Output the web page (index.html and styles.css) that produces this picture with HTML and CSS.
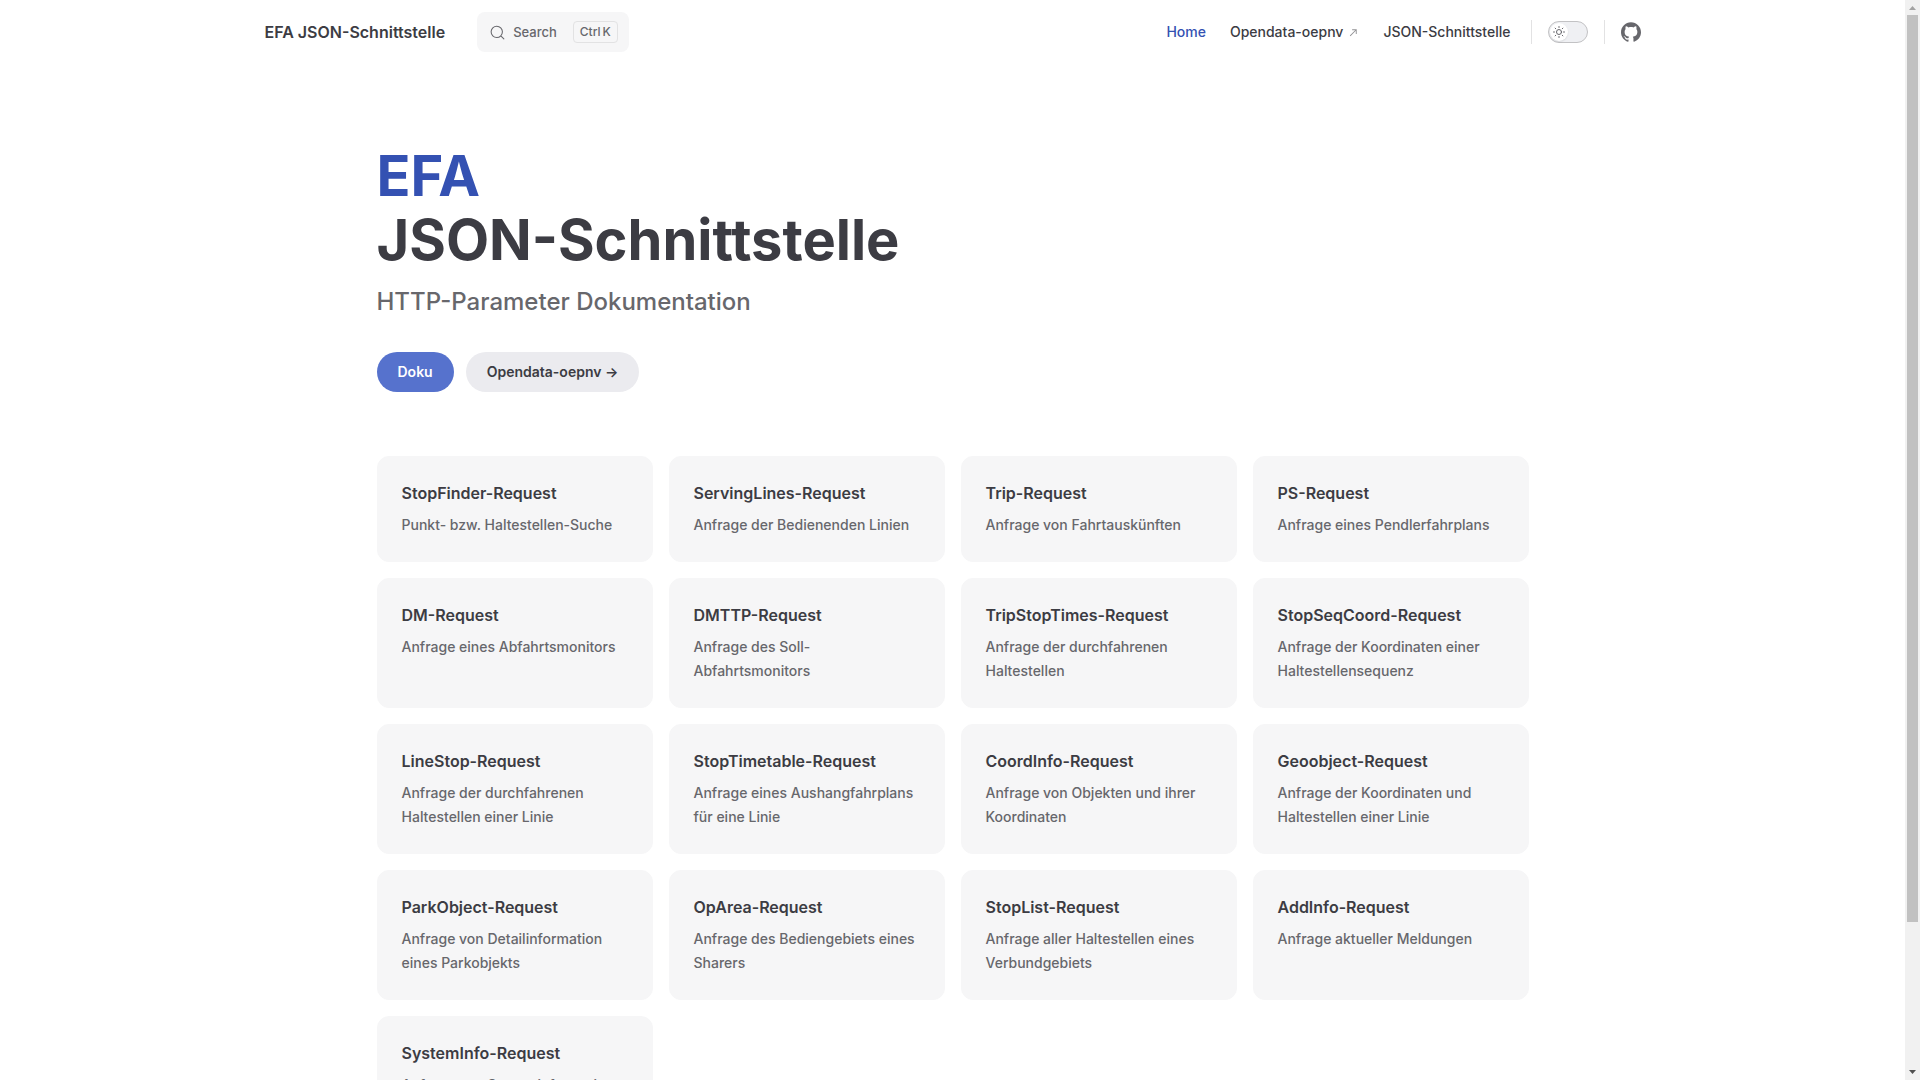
FILE: index.html
```html
<!DOCTYPE html>
<html lang="de">
<head>
<meta charset="utf-8">
<meta name="viewport" content="width=device-width, initial-scale=1">
<title>EFA JSON-Schnittstelle</title>
<link rel="stylesheet" href="styles.css">
</head>
<body>
<div class="page">
<header class="nav">
  <div class="nav-inner">
    <a class="site-title" href="#">EFA JSON-Schnittstelle</a>
    <button class="search" type="button">
      <svg class="search-icon" viewBox="0 0 20 20" aria-hidden="true"><path d="M14.386 14.386l4.088 4.088-4.088-4.088A7.533 7.533 0 1 1 3.733 3.733a7.533 7.533 0 0 1 10.653 10.653z" fill="none" stroke="currentColor" stroke-width="1.4" stroke-linecap="round" stroke-linejoin="round"/></svg>
      <span class="search-label">Search</span>
      <kbd class="search-keys"><span>Ctrl</span><span>K</span></kbd>
    </button>
    <nav class="menu">
      <a class="menu-link active" href="#">Home</a>
      <a class="menu-link" href="#">Opendata-oepnv<svg class="external-icon" viewBox="0 0 24 24" aria-hidden="true"><path d="M9 5v2h6.59L4 18.59 5.41 20 17 8.41V15h2V5H9z" fill="currentColor"/></svg></a>
      <a class="menu-link" href="#">JSON-Schnittstelle</a>
    </nav>
    <div class="nav-group">
      <button class="switch" type="button" role="switch" aria-checked="false" aria-label="Dark mode">
        <span class="switch-knob"><svg class="sun-icon" viewBox="0 0 24 24" aria-hidden="true"><g fill="none" stroke="currentColor" stroke-width="2" stroke-linecap="round"><circle cx="12" cy="12" r="5"/><path d="M12 1v2M12 21v2M1 12h2M21 12h2M4.2 4.2l1.4 1.4M18.4 18.4l1.4 1.4M4.2 19.8l1.4-1.4M18.4 5.6l1.4-1.4"/></g></svg></span>
      </button>
    </div>
    <div class="nav-group">
      <a class="social" href="#" aria-label="GitHub"><svg class="social-icon" viewBox="0 0 24 24" aria-hidden="true"><path fill="currentColor" d="M12 .297c-6.63 0-12 5.373-12 12 0 5.303 3.438 9.8 8.205 11.385.6.113.82-.258.82-.577 0-.285-.01-1.04-.015-2.04-3.338.724-4.042-1.61-4.042-1.61C4.422 18.07 3.633 17.7 3.633 17.7c-1.087-.744.084-.729.084-.729 1.205.084 1.838 1.236 1.838 1.236 1.07 1.835 2.809 1.305 3.495.998.108-.776.417-1.305.76-1.605-2.665-.3-5.466-1.332-5.466-5.93 0-1.31.465-2.38 1.235-3.22-.135-.303-.54-1.523.105-3.176 0 0 1.005-.322 3.3 1.23.96-.267 1.98-.399 3-.405 1.02.006 2.04.138 3 .405 2.28-1.552 3.285-1.23 3.285-1.23.645 1.653.24 2.873.12 3.176.765.84 1.23 1.91 1.23 3.22 0 4.61-2.805 5.625-5.475 5.92.42.36.81 1.096.81 2.22 0 1.606-.015 2.896-.015 3.286 0 .315.21.69.825.57C20.565 22.092 24 17.592 24 12.297c0-6.627-5.373-12-12-12"/></svg></a>
    </div>
  </div>
</header>
<main class="home">
  <section class="hero">
    <h1 class="hero-title"><span class="hero-name">EFA</span><span>JSON-Schnittstelle</span></h1>
    <p class="tagline">HTTP-Parameter Dokumentation</p>
    <div class="actions">
      <a class="action brand" href="#">Doku</a>
      <a class="action alt" href="#">Opendata-oepnv →</a>
    </div>
  </section>
  <section class="features">
    <article class="card"><h2>StopFinder-Request</h2><p>Punkt- bzw. Haltestellen-Suche</p></article>
    <article class="card"><h2>ServingLines-Request</h2><p>Anfrage der Bedienenden Linien</p></article>
    <article class="card"><h2>Trip-Request</h2><p>Anfrage von Fahrtauskünften</p></article>
    <article class="card"><h2>PS-Request</h2><p>Anfrage eines Pendlerfahrplans</p></article>
    <article class="card"><h2>DM-Request</h2><p>Anfrage eines Abfahrtsmonitors</p></article>
    <article class="card"><h2>DMTTP-Request</h2><p>Anfrage des Soll-Abfahrtsmonitors</p></article>
    <article class="card"><h2>TripStopTimes-Request</h2><p>Anfrage der durchfahrenen Haltestellen</p></article>
    <article class="card"><h2>StopSeqCoord-Request</h2><p>Anfrage der Koordinaten einer Haltestellensequenz</p></article>
    <article class="card"><h2>LineStop-Request</h2><p>Anfrage der durchfahrenen Haltestellen einer Linie</p></article>
    <article class="card"><h2>StopTimetable-Request</h2><p>Anfrage eines Aushangfahrplans für eine Linie</p></article>
    <article class="card"><h2>CoordInfo-Request</h2><p>Anfrage von Objekten und ihrer Koordinaten</p></article>
    <article class="card"><h2>Geoobject-Request</h2><p>Anfrage der Koordinaten und Haltestellen einer Linie</p></article>
    <article class="card"><h2>ParkObject-Request</h2><p>Anfrage von Detailinformation eines Parkobjekts</p></article>
    <article class="card"><h2>OpArea-Request</h2><p>Anfrage des Bediengebiets eines Sharers</p></article>
    <article class="card"><h2>StopList-Request</h2><p>Anfrage aller Haltestellen eines Verbundgebiets</p></article>
    <article class="card"><h2>AddInfo-Request</h2><p>Anfrage aktueller Meldungen</p></article>
    <article class="card"><h2>SystemInfo-Request</h2><p>Anfrage von Systeminformation</p></article>
  </section>
</main>
</div>
<div class="scrollbar" aria-hidden="true">
  <svg class="scroll-arrow dim" viewBox="0 0 15 15"><path d="M4 10h7L7.5 6z" fill="currentColor"/></svg>
  <div class="scroll-track"><div class="scroll-thumb"></div></div>
  <svg class="scroll-arrow" viewBox="0 0 15 15"><path d="M4 5h7L7.500 9z" fill="currentColor"/></svg>
</div>
</body>
</html>
```
FILE: styles.css
```css
:root {
  --text-1: #3c3c43;
  --text-2: #67676c;
  --text-3: #929295;
  --brand: #3451b2;
  --brand-fill: #5672cd;
  --soft: #f6f6f7;
  --divider: #e2e2e3;
}

* { box-sizing: border-box; }

body {
  display: flex;
  height: 100vh;
  margin: 0;
  background: #fff;
  color: var(--text-1);
  font-family: Inter, "Noto Sans", sans-serif;
  font-size: 16px;
  font-variant-ligatures: no-common-ligatures;
  line-height: 24px;
}

a { color: inherit; text-decoration: none; }
h1, h2, p { margin: 0; }
svg { display: block; flex: none; }
button { font-family: inherit; cursor: pointer; }

.page {
  flex: 1;
  min-width: 0;
  overflow-y: auto;
  scrollbar-width: none;
}

.scrollbar {
  display: flex;
  flex-direction: column;
  width: 15px;
  background: #f1f1f1;
}

.scroll-arrow { width: 15px; height: 15px; color: #505050; }
.scroll-arrow.dim { color: #a3a3a3; }
.scroll-track { flex: 1; padding: 0 2px; }
.scroll-thumb { height: 86.4%; background: #c1c1c1; }

.nav { padding: 0 32px; }

.nav-inner {
  display: flex;
  align-items: center;
  max-width: 1376px;
  height: 64px;
  margin: 0 auto;
}

.site-title { margin-right: 32px; font-weight: 600; }

.search {
  display: flex;
  align-items: center;
  height: 40px;
  padding: 0 10px 0 12px;
  border: 1px solid transparent;
  border-radius: 8px;
  background: var(--soft);
  color: var(--text-2);
}

.search-icon { width: 15px; height: 15px; margin-right: 8px; }

.search-label {
  margin-right: 16px;
  font-size: 13px;
  font-weight: 500;
}

.search-keys {
  display: flex;
  gap: 2px;
  padding: 0 6px;
  border: 1px solid var(--divider);
  border-radius: 4px;
  font-family: inherit;
  font-size: 12px;
  font-weight: 500;
  line-height: 20px;
}

.menu { display: flex; margin-left: auto; margin-right: 8px; }

.menu-link {
  display: flex;
  align-items: center;
  padding: 0 12px;
  font-size: 14px;
  font-weight: 500;
}

.menu-link.active { color: var(--brand); }

.external-icon { width: 11px; height: 11px; margin-left: 5px; color: var(--text-3); }

.nav-group { display: flex; align-items: center; }

.nav-group::before {
  content: "";
  width: 1px;
  height: 24px;
  margin-right: 16px;
  background: var(--divider);
}

.switch {
  width: 40px;
  height: 22px;
  margin-right: 16px;
  padding: 1px;
  border: 1px solid #c2c2c4;
  border-radius: 11px;
  background: #eff0f3;
}

.switch-knob {
  display: grid;
  place-items: center;
  width: 18px;
  height: 18px;
  border-radius: 50%;
  background: #fff;
  box-shadow: 0 1px 2px rgba(0, 0, 0, 0.04), 0 1px 2px rgba(0, 0, 0, 0.06);
  color: var(--text-2);
}

.sun-icon { width: 12px; height: 12px; }

.social { color: var(--text-2); }
.social-icon { width: 20px; height: 20px; }

.home { padding: 80px 64px 128px; }

.hero, .features { max-width: 1152px; margin: 0 auto; }

.hero-title {
  display: flex;
  flex-direction: column;
  font-size: 56px;
  font-weight: 700;
  line-height: 64px;
}

.hero-name { color: var(--brand); }

.tagline {
  padding-top: 12px;
  color: var(--text-2);
  font-size: 24px;
  font-weight: 500;
  line-height: 36px;
}

.actions { display: flex; gap: 12px; padding: 32px 0 64px; }

.action {
  padding: 0 20px;
  border: 1px solid transparent;
  border-radius: 20px;
  font-size: 14px;
  font-weight: 600;
  line-height: 38px;
}

.brand { background: var(--brand-fill); color: #fff; }
.alt { background: #ebebef; }

.features {
  display: grid;
  grid-template-columns: repeat(4, 1fr);
  gap: 16px;
}

.card {
  padding: 24px;
  border: 1px solid var(--soft);
  border-radius: 12px;
  background: var(--soft);
}

.card h2 { font-size: 16px; font-weight: 600; line-height: 24px; }

.card p {
  padding-top: 8px;
  color: var(--text-2);
  font-size: 14px;
  font-weight: 500;
}

@media (max-width: 959px) {
  .features { grid-template-columns: repeat(2, 1fr); }
}
```
